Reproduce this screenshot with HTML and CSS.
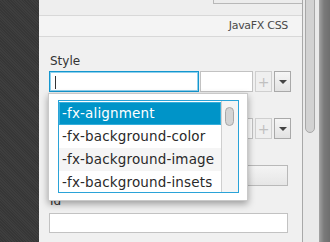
FILE: index.html
```html
<!DOCTYPE html>
<html>
<head>
<meta charset="utf-8">
<link rel="stylesheet" href="styles.css">
</head>
<body>
<div class="screen">
  <div class="desk"></div>
  <div class="panel">
    <div class="top"><div class="topbtn"></div></div>
    <div class="header">JavaFX CSS</div>
    <div class="content">
      <div class="label style-label">Style</div>
      <div class="row">
        <div class="field main focused"><span class="caret"></span></div>
        <div class="field small"></div>
        <div class="sqbtn plus">+</div>
        <div class="sqbtn drop"><span class="tri"></span></div>
      </div>
      <div class="row row2">
        <div class="field main"></div>
        <div class="field small"></div>
        <div class="sqbtn plus">+</div>
        <div class="sqbtn drop"><span class="tri"></span></div>
      </div>
      <div class="wide-btn"></div>
      <div class="label id-label">Id</div>
      <div class="field idfield"></div>
    </div>
    <div class="popup">
      <div class="list">
        <div class="items">
          <div class="item selected">-fx-alignment</div>
          <div class="item">-fx-background-color</div>
          <div class="item alt">-fx-background-image</div>
          <div class="item">-fx-background-insets</div>
        </div>
        <div class="lscroll"><div class="lthumb"></div></div>
      </div>
    </div>
  </div>
  <div class="vscroll"><div class="vthumb"></div></div>
  <div class="edge"></div>
</div>
</body>
</html>
```
FILE: styles.css
```css
html, body {
  margin: 0;
  padding: 0;
  width: 330px;
  height: 242px;
  overflow: hidden;
  font-family: "DejaVu Sans", "Open Sans", sans-serif;
}
.screen {
  display: flex;
  width: 330px;
  height: 242px;
}
.desk {
  width: 39px;
  flex: none;
  background-color: #3e3e3e;
  background-image: repeating-linear-gradient(45deg, rgba(0,0,0,0.12) 0 1px, transparent 1px 2px);
}
.panel {
  position: relative;
  width: 263px;
  flex: none;
  background: #f0f0f0;
  border-right: 1px solid #a8a8a8;
}
.top {
  height: 15px;
  border-bottom: 1px solid #d8d8d8;
  background: #eeeeee;
  position: relative;
}
.topbtn {
  margin-left: 174px;
  height: 3px;
  border: 1px solid #b8b8b8;
  border-top: none;
  border-right: none;
  background: #ececec;
}
.header {
  height: 20px;
  border-bottom: 1px solid #d8d8d8;
  background: #f4f4f4;
  font-size: 11px;
  line-height: 20px;
  color: #4a4a4a;
  text-align: right;
  padding-right: 14px;
  letter-spacing: -0.3px;
}
.content {
  padding-left: 10px;
  padding-top: 17px;
}
.label {
  font-size: 12px;
  color: #333;
  line-height: 14px;
  padding-left: 1px;
}
.row {
  display: flex;
  margin-top: 3px;
  height: 21px;
  align-items: stretch;
}
.row2 {
  margin-top: 26px;
}
.field {
  box-sizing: border-box;
  background: #ffffff;
  border: 1px solid #c2c2c2;
}
.field.main {
  width: 150px;
}
.field.small {
  width: 53px;
  margin-left: 1px;
}
.focused {
  border: 1px solid #1497cf;
  box-shadow: inset 0 0 0 1px #8fd0ec;
  position: relative;
}
.caret {
  position: absolute;
  left: 5px;
  top: 4px;
  width: 1px;
  height: 13px;
  background: #333;
}
.sqbtn {
  box-sizing: border-box;
  width: 17px;
  margin-left: 2px;
  border: 1px solid #cfcfcf;
  background: #efefef;
  font-size: 14px;
  color: #c0c0c0;
  text-align: center;
  line-height: 18px;
  display: flex;
  align-items: center;
  justify-content: center;
}
.sqbtn.drop {
  border-color: #a9a9a9;
  background: linear-gradient(#f6f6f6, #e2e2e2);
}
.tri {
  width: 0;
  height: 0;
  border-left: 4px solid transparent;
  border-right: 4px solid transparent;
  border-top: 4px solid #444;
}
.wide-btn {
  margin-top: 26px;
  width: 239px;
  height: 21px;
  box-sizing: border-box;
  border: 1px solid #b9b9b9;
  background: linear-gradient(#f4f4f4, #e6e6e6);
}
.id-label {
  margin-top: 8px;
}
.idfield {
  margin-top: 5px;
  width: 239px;
  height: 20px;
}
.popup {
  position: absolute;
  left: 9px;
  top: 93px;
  width: 200px;
  height: 108px;
  box-sizing: border-box;
  background: #ffffff;
  border: 1px solid #c9c9c9;
  box-shadow: 0 3px 7px rgba(0,0,0,0.35);
  padding: 6px 8px 7px 9px;
}
.list {
  display: flex;
  height: 93px;
  box-sizing: border-box;
  border: 1px solid #2aa3d8;
  overflow: hidden;
}
.items {
  flex: 1;
  padding-top: 1px;
}
.item {
  height: 23px;
  line-height: 23px;
  font-size: 13.5px;
  letter-spacing: 0.15px;
  color: #2a2a2a;
  padding-left: 3px;
  white-space: nowrap;
  background: #ffffff;
}
.item.alt {
  background: #f5f5f5;
}
.item.selected {
  background: #0094c8;
  color: #ffffff;
  box-shadow: inset 0 0 0 1px #35aedb;
}
.lscroll {
  width: 16px;
  border-left: 1px solid #cfcfcf;
  background: #f4f4f4;
  position: relative;
}
.lthumb {
  position: absolute;
  left: 3px;
  top: 6px;
  width: 9px;
  height: 19px;
  box-sizing: border-box;
  border: 1px solid #a8a8a8;
  border-radius: 5px;
  background: #d4d4d4;
}
.vscroll {
  width: 16px;
  flex: none;
  background: #eaeaea;
  border-right: 1px solid #a0a0a0;
  position: relative;
}
.vthumb {
  position: absolute;
  left: 2px;
  top: -6px;
  width: 10px;
  height: 139px;
  box-sizing: border-box;
  border: 1px solid #a8a8a8;
  border-radius: 5px;
  background: #d2d2d2;
}
.edge {
  flex: 1;
  background: linear-gradient(90deg, #9a9a9a, #7a7a7a 40%, #6e6e6e);
}
```
